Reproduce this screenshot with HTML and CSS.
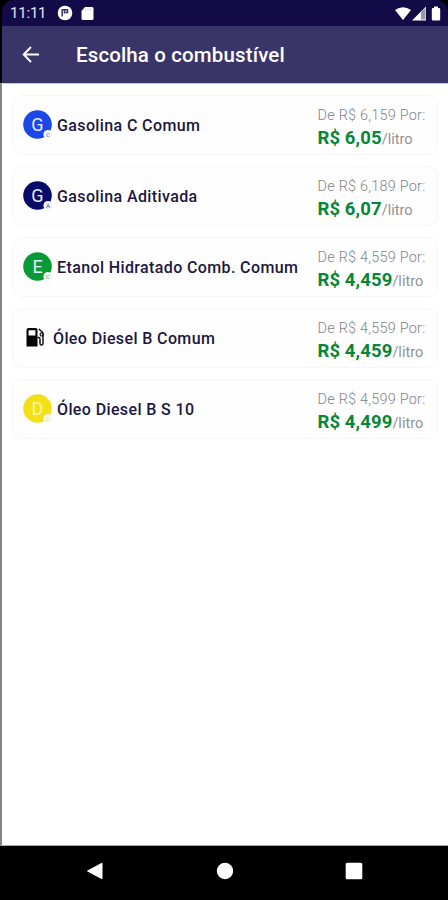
FILE: index.html
```html
<!DOCTYPE html>
<html lang="pt-BR">
<head>
<meta charset="utf-8">
<title>Escolha o combustível</title>
<link rel="stylesheet" href="styles.css">
</head>
<body>
<div class="phone">
  <header class="status">
    <span class="clock">11:11</span>
    <svg class="status-left" width="40" height="18" viewBox="0 0 40 18">
      <circle cx="8" cy="9" r="7.3" fill="#fff"/>
      <path d="M5.200 12.500V5.800H7.500V9.500M7.500 5.800H10.500V8.500H8.500" fill="none" stroke="#39345f" stroke-width="1.500"/>
      <path d="M28 3h7q1.5 0 1.5 1.5v10q0 1.5-1.5 1.5h-9q-1.5 0-1.5-1.5V7z" fill="#fff"/>
      <path d="M28.5 4.5v2M31 4.5v2M33.5 4.5v2" stroke="#c5c3d3" stroke-width="1"/>
    </svg>
    <svg class="status-right" width="48" height="18" viewBox="0 0 48 18">
      <path d="M0 6Q8 .5 16 6L8 16z" fill="#fff"/>
      <path d="M17 16.500L31 2.500V16.500z" fill="#fff"/>
      <path d="M26 8L30.500 3.500V15.500H26z" fill="#99979f"/>
      <path d="M39 4V2.500h4V4h1q1.200 0 1.200 1.200v10.100q0 1.200-1.200 1.200h-6q-1.200 0-1.200-1.200V5.200Q36.800 4 38 4z" fill="#fff"/>
    </svg>
  </header>
  <nav class="appbar">
    <svg width="18" height="18" viewBox="0 0 18 18" fill="none" stroke="#fff" stroke-width="1.900"><path d="M17 8.500H2M9 1L1.700 8.500L9 16"/></svg>
    <h1>Escolha o combustível</h1>
  </nav>
  <main class="list">
    <section class="card">
      <svg class="fuel" width="30" height="30" viewBox="0 0 30 30"><circle cx="14.500" cy="14.500" r="14.300" fill="#1c48e8"/><text class="letter" x="14.500" y="20.500">G</text><circle class="badge" cx="25" cy="24.500" r="4.600"/><text class="mini" x="25" y="27" fill="#1c48e8">C</text></svg>
      <h2>Gasolina C Comum</h2>
      <div class="price"><p class="old">De R$ 6,159 Por:</p><p class="now"><b>R$ 6,05</b>/litro</p></div>
    </section>
    <section class="card">
      <svg class="fuel" width="30" height="30" viewBox="0 0 30 30"><circle cx="14.500" cy="14.500" r="14.300" fill="#080b68"/><text class="letter" x="14.500" y="20.500">G</text><circle class="badge" cx="25" cy="24.500" r="4.600"/><text class="mini" x="25" y="27" fill="#080b68">A</text></svg>
      <h2>Gasolina Aditivada</h2>
      <div class="price"><p class="old">De R$ 6,189 Por:</p><p class="now"><b>R$ 6,07</b>/litro</p></div>
    </section>
    <section class="card">
      <svg class="fuel" width="30" height="30" viewBox="0 0 30 30"><circle cx="14.500" cy="14.500" r="14.300" fill="#079b36"/><text class="letter" x="14.500" y="20.500">E</text><circle class="badge" cx="25" cy="24.500" r="4.600"/><text class="mini" x="25" y="27" fill="#079b36">C</text></svg>
      <h2>Etanol Hidratado Comb. Comum</h2>
      <div class="price"><p class="old">De R$ 4,559 Por:</p><p class="now"><b>R$ 4,459</b>/litro</p></div>
    </section>
    <section class="card">
      <svg class="fuel pump" width="26" height="30" viewBox="0 0 26 30">
        <path fill-rule="evenodd" d="M5.500 5h7q2 0 2 2V23.500h-11V7q0-2 2-2zM5.600 7.300v5.200h6.800V7.300z" fill="#050505"/>
        <path d="M14.500 14.500h1q1.500 0 1.500 1.700v4.300q0 1.600 1.500 1.600t1.500-1.600V11q0-1.200-1-2.200L15.800 6" fill="none" stroke="#111" stroke-width="1.500"/>
        <circle cx="18.700" cy="11.400" r="1.600" fill="none" stroke="#111" stroke-width="1.200"/>
      </svg>
      <h2>Óleo Diesel B Comum</h2>
      <div class="price"><p class="old">De R$ 4,559 Por:</p><p class="now"><b>R$ 4,459</b>/litro</p></div>
    </section>
    <section class="card">
      <svg class="fuel" width="30" height="30" viewBox="0 0 30 30"><circle cx="14.500" cy="14.500" r="14.300" fill="#f4e018"/><text class="letter pale" x="14.500" y="20.500">D</text><circle class="badge" cx="25" cy="24.500" r="4.600"/><text class="mini" x="25" y="27" fill="#f4e018">C</text></svg>
      <h2>Óleo Diesel B S 10</h2>
      <div class="price"><p class="old">De R$ 4,599 Por:</p><p class="now"><b>R$ 4,499</b>/litro</p></div>
    </section>
  </main>
  <footer class="navbar">
    <svg width="18" height="18" viewBox="0 0 18 18"><path d="M1.500 9L16 1.200V16.800z" fill="#fff" stroke="#fff" stroke-linejoin="round"/></svg>
    <svg width="18" height="18" viewBox="0 0 18 18"><circle cx="9" cy="9" r="8.200" fill="#fff"/></svg>
    <svg width="18" height="18" viewBox="0 0 18 18"><rect x=".7" y=".7" width="16.600" height="16.600" rx="1.500" fill="#fff"/></svg>
  </footer>
</div>
</body>
</html>
```
FILE: styles.css
```css
* { box-sizing: border-box; margin: 0; }
body { background: #000; font-family: Roboto, "Liberation Sans", sans-serif; }
.phone { width: 448px; height: 900px; display: flex; flex-direction: column; overflow: hidden; }
.status {
  height: 26px; flex: none; display: flex; align-items: center;
  margin-left: 2px; padding: 0 8px 0 8px;
  background: #120b48; border-radius: 12px 12px 0 0; color: #e7e5f2;
}
.clock { width: 47px; font-size: 15px; line-height: 26px; letter-spacing: -.2px; }
.status-right { margin-left: auto; margin-right: -3px; }
.appbar {
  height: 57px; flex: none; display: flex; align-items: center; gap: 36px;
  margin-left: 2px; padding-left: 20px; background: #3a3568; color: #fff;
}
.appbar h1 { font-size: 20.500px; font-weight: 500; line-height: 28px; letter-spacing: .13px; white-space: nowrap; }
.list {
  flex: 1; display: flex; flex-direction: column; gap: 11.200px;
  padding: 10.500px 10px 0; background: #fff;
  border-left: 2px solid #858585; border-top: 1px solid #c8c6d8; border-bottom: 1px solid #aaa;
}
.card {
  height: 60px; flex: none; display: flex; align-items: center;
  padding: 0 10px; border: 1px solid #f6f6f7; border-radius: 10px; background: #fefefe;
}
.fuel { flex: none; margin-right: 4px; }
.letter { font-size: 18px; fill: #e8ecff; text-anchor: middle; }
.pale { fill: #fff6a0; }
.badge { fill: #f4f7f8; }
.mini { font-size: 6px; font-weight: 500; text-anchor: middle; opacity: .65; }
.card h2 { flex: 1; font-size: 16px; font-weight: 500; line-height: 24px; letter-spacing: .38px; padding-top: 2px; color: #1c1740; white-space: nowrap; }
.price { width: 109.500px; padding-top: 8px; white-space: nowrap; color: #929296; }
.old { font-size: 14.500px; font-weight: 300; line-height: 20px; letter-spacing: .2px; color: #858589; }
.now { font-size: 14.500px; line-height: 25px; }
.now b { font-size: 18.500px; font-weight: 700; letter-spacing: .1px; color: #078638; }
.navbar {
  height: 54px; flex: none; display: flex; justify-content: space-between; align-items: center;
  padding: 0 85px 5px 86px; background: #000;
}
```
